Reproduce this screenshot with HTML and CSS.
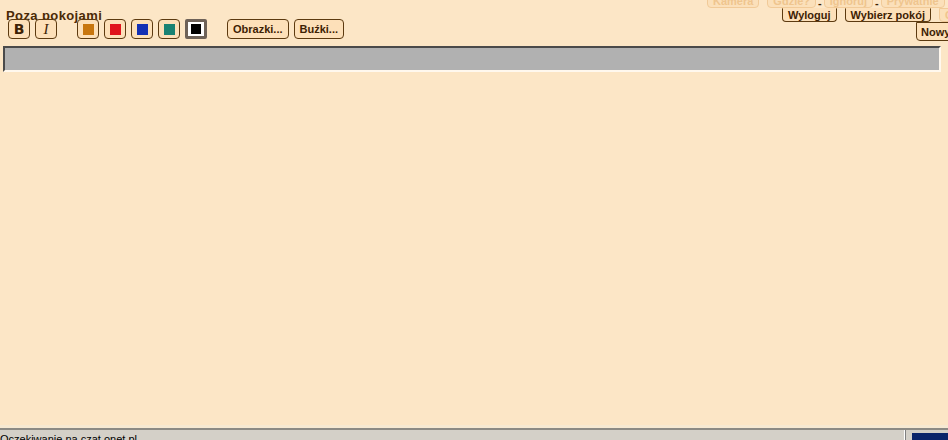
FILE: index.html
```html
<!DOCTYPE html>
<html lang="pl">
<head>
  <meta charset="UTF-8" />
  <title>Czat - Poza pokojami</title>
  <link rel="stylesheet" href="styles.css">
</head>
<body>

  <div class="top">
    <div class="left">
      <div class="title">Poza pokojami</div>
      <div class="toolbar">
        <button class="btn fmt"><b>B</b></button>
        <button class="btn fmt"><i>I</i></button>
        <span class="spacer"></span>
        <button class="btn color"><span class="swatch" style="background:#c8760e"></span></button>
        <button class="btn color"><span class="swatch" style="background:#e0141c"></span></button>
        <button class="btn color"><span class="swatch" style="background:#1430b4"></span></button>
        <button class="btn color"><span class="swatch" style="background:#1a8272"></span></button>
        <button class="btn color selected"><span class="swatch" style="background:#000"></span></button>
        <span class="spacer"></span>
        <button class="btn text">Obrazki...</button>
        <button class="btn text">Buźki...</button>
      </div>
    </div>

    <div class="right">
      <div class="row row-1">
        <button class="btn small faded">Kamera</button>
        <button class="btn small faded">Gdzie?</button>
        <span class="dash">-</span>
        <button class="btn small faded">Ignoruj</button>
        <span class="dash">-</span>
        <button class="btn small faded">Prywatnie</button>
      </div>
      <div class="row row-2">
        <button class="btn small open">Wyloguj</button>
        <button class="btn small open">Wybierz pokój</button>
        <button class="btn small open faded">Czyść</button>
      </div>
      <div class="row row-3">
        <button class="btn tall">Nowy pokój</button>
      </div>
    </div>
  </div>

  <div class="input-wrap">
    <div class="input"></div>
  </div>

  <div class="main"></div>

  <div class="statusbar">
    <div class="status-text">Oczekiwanie na czat.onet.pl</div>
    <div class="status-panel"><span class="progress"></span></div>
  </div>

</body>
</html>
```

FILE: styles.css
```css
html, body {
  margin: 0;
  height: 100%;
}

body {
  background: #fce6c6;
  font-family: "Liberation Sans", Arial, sans-serif;
  color: #3e2204;
  display: flex;
  flex-direction: column;
  overflow: hidden;
}

.top {
  display: flex;
  height: 46px;
  flex: none;
}

.left {
  padding: 10px 0 0 6px;
}

.title {
  font-size: 13px;
  font-weight: bold;
  line-height: 12px;
  height: 12px;
  letter-spacing: 0.4px;
  color: #4a2a06;
}

.toolbar {
  display: flex;
  gap: 5px;
  margin-top: -3px;
  padding-left: 2px;
}

.spacer {
  width: 10px;
}

.btn {
  box-sizing: border-box;
  height: 20px;
  margin: 0;
  padding: 0 4px;
  border: 1px solid #5c3a10;
  border-radius: 4px;
  background: #fde0b9;
  color: #3e2204;
  font-family: "Liberation Sans", Arial, sans-serif;
  font-size: 11px;
  font-weight: bold;
  white-space: nowrap;
  display: flex;
  align-items: center;
  justify-content: center;
}

.fmt {
  width: 22px;
  font-size: 14px;
  font-family: "DejaVu Sans", sans-serif;
}

.fmt i {
  font-family: "Liberation Serif", serif;
  font-weight: normal;
  font-size: 15px;
}

.color {
  width: 22px;
  padding: 0;
}

.swatch {
  width: 11px;
  height: 11px;
}

.color.selected {
  border: 3px solid #6e6258;
  border-radius: 2px;
  background: #fff;
}

.color.selected .swatch {
  width: 10px;
  height: 10px;
}

.text {
  padding: 0 5px;
}

.right {
  margin-left: auto;
  width: 241px;
  display: flex;
  flex-direction: column;
  margin-top: -6px;
}

.row {
  display: flex;
  align-items: center;
  gap: 8px;
  white-space: nowrap;
}

.row-1 {
  height: 14px;
}

.row-2 {
  height: 14px;
  padding-left: 75px;
}

.row-3 {
  height: 19px;
  padding-left: 209px;
}

.small {
  height: 14px;
  border-radius: 0 0 4px 4px;
  padding: 0 5px;
}

.open {
  border-top-color: transparent;
}

.faded {
  border-color: #f1ca98;
  color: #efc58e;
  background: #fbe0ba;
}

.dash {
  font-size: 11px;
  font-weight: bold;
  margin: 0 -6px;
  align-self: flex-end;
  line-height: 9px;
}

.tall {
  height: 19px;
  border-radius: 0 0 0 4px;
  padding: 0 4px;
}

.input-wrap {
  padding: 0 7px 0 3px;
  flex: none;
}

.input {
  height: 22px;
  background: #b1b1b1;
  border-top: 2px solid #4a4a4a;
  border-left: 2px solid #4a4a4a;
  border-bottom: 2px solid #fff8ee;
  border-right: 2px solid #fff8ee;
}

.main {
  flex: 1;
  border-bottom: 3px solid #f6e9d2;
}

.statusbar {
  flex: none;
  height: 10px;
  display: flex;
  background: #d4d0c8;
  border-top: 2px solid #8c8a84;
  overflow: hidden;
}

.status-text {
  flex: 1;
  font-size: 11px;
  line-height: 14px;
  padding-top: 2px;
  color: #000;
}

.status-panel {
  box-sizing: border-box;
  flex: none;
  width: 44px;
  border-left: 1px solid #fff;
  box-shadow: inset 1px 0 0 #808080;
  padding: 3px 0 0 7px;
}

.progress {
  display: block;
  height: 10px;
  background: #0a246a;
}
```
